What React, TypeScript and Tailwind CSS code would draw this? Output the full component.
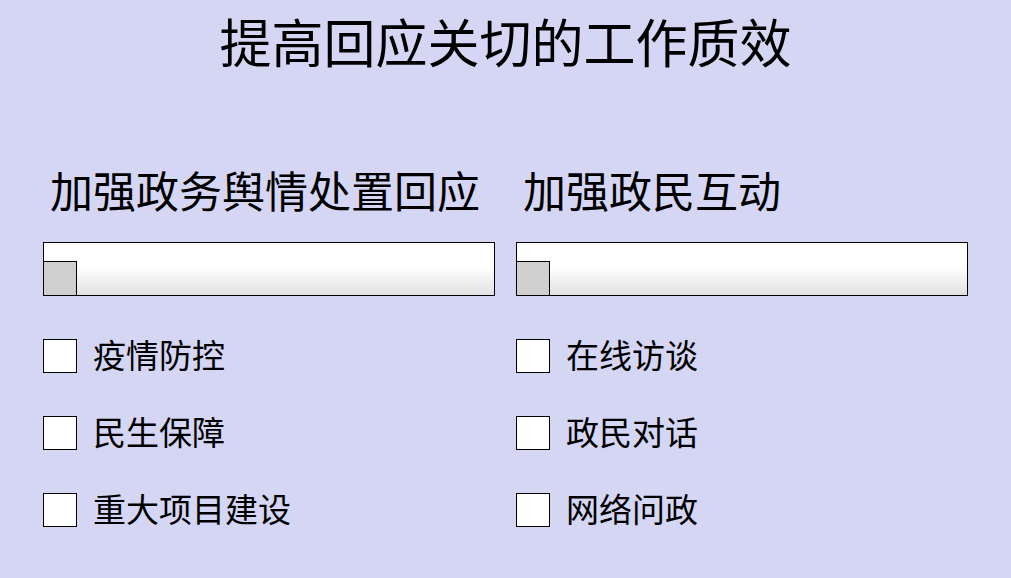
import React from "react";

const left = ["疫情防控", "民生保障", "重大项目建设"];
const right = ["在线访谈", "政民对话", "网络问政"];

function Column({ title, items }: { title: string; items: string[] }) {
  return (
    <div className="flex flex-col">
      <div className="pl-[7px] text-[43px] leading-[43px] whitespace-nowrap">{title}</div>
      <div className="mt-[31px] h-[54px] border border-black bg-linear-to-b from-white from-45% to-[#e2e2e2] flex items-end">
        <div className="w-[33px] h-[34px] border-t border-r border-black bg-[#cfcfcf]" />
      </div>
      <div className="mt-[43px] flex flex-col gap-[43px]">
        {items.map((t) => (
          <div key={t} className="flex items-center h-[34px]">
            <div className="w-[34px] h-[34px] border border-black bg-white" />
            <span className="ml-[16px] pb-[4px] text-[33px] leading-[34px] whitespace-nowrap">{t}</span>
          </div>
        ))}
      </div>
    </div>
  );
}

export default function App() {
  return (
    <div className="w-[1011px] h-[578px] bg-[#d5d5f4] text-black font-['Noto_Sans_CJK_SC',sans-serif] overflow-hidden">
      <h1 className="pt-[15px] text-center text-[52px] leading-[52px] font-normal">提高回应关切的工作质效</h1>
      <div className="mt-[101px] pl-[43px] grid grid-cols-[452px_452px] gap-x-[21px]">
        <Column title="加强政务舆情处置回应" items={left} />
        <Column title="加强政民互动" items={right} />
      </div>
    </div>
  );
}
